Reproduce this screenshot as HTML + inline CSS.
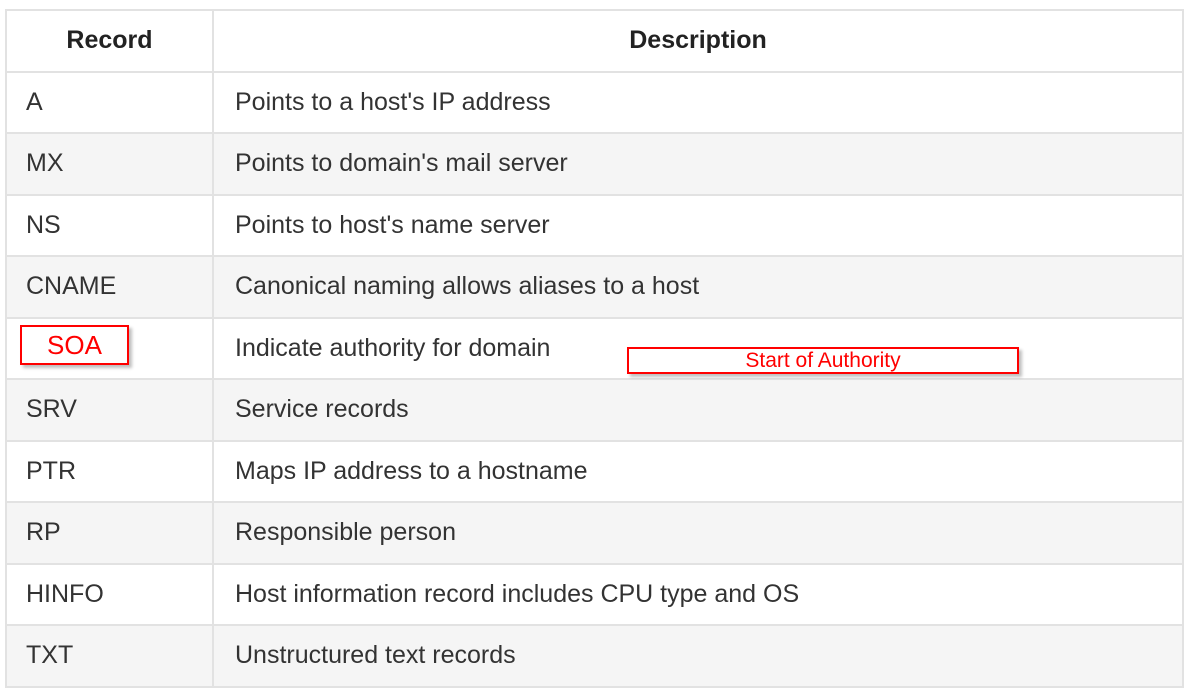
<!DOCTYPE html>
<html><head><style>
body{margin:0;background:#fff;width:1187px;height:691px;position:relative;overflow:hidden;font-family:"Liberation Sans",sans-serif;}
table{position:absolute;left:5px;top:9px;border-collapse:collapse;width:1179px;}
td,th{border:2px solid #e2e2e2;height:59.5px;padding:0 0 0 21px;font-size:25px;color:#333;text-align:left;}
th{font-weight:bold;text-align:center;padding:0;color:#222;height:59.5px;}
th:first-child{width:205px;}
td:first-child{width:186px;padding-left:19px;}
tr:nth-child(odd) td{background:#f5f5f5;}
.box{position:absolute;border:2px solid #f00;background:#fff;color:#f00;text-align:center;box-shadow:3px 3px 3px rgba(0,0,0,.25);box-sizing:border-box;}
</style></head><body>
<table>
<tr><th>Record</th><th>Description</th></tr>
<tr><td>A</td><td>Points to a host's IP address</td></tr>
<tr><td>MX</td><td>Points to domain's mail server</td></tr>
<tr><td>NS</td><td>Points to host's name server</td></tr>
<tr><td>CNAME</td><td>Canonical naming allows aliases to a host</td></tr>
<tr><td></td><td>Indicate authority for domain</td></tr>
<tr><td>SRV</td><td>Service records</td></tr>
<tr><td>PTR</td><td>Maps IP address to a hostname</td></tr>
<tr><td>RP</td><td>Responsible person</td></tr>
<tr><td>HINFO</td><td>Host information record includes CPU type and OS</td></tr>
<tr><td>TXT</td><td>Unstructured text records</td></tr>
</table>
<div class="box" style="left:20px;top:325px;width:109px;height:40px;font-size:26px;line-height:36px;">SOA</div>
<div class="box" style="left:627px;top:347px;width:392px;height:27px;font-size:21px;line-height:23px;">Start of Authority</div>
</body></html>
